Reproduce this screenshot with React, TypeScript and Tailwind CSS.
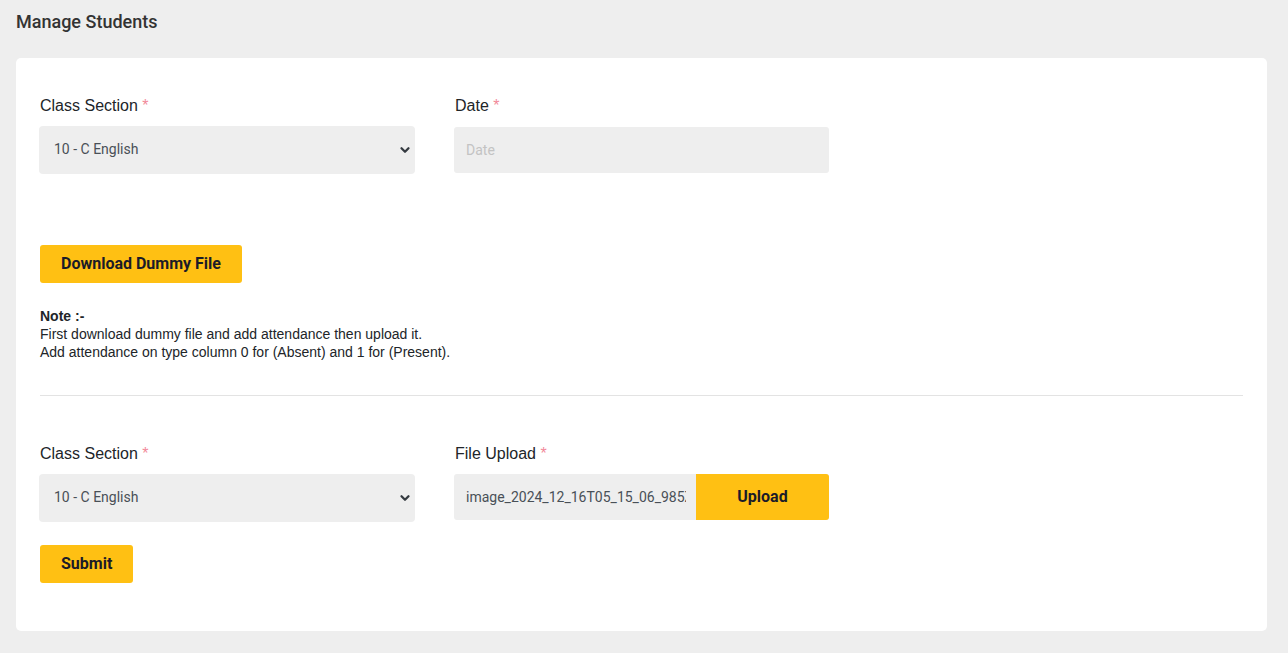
import React, { useState } from 'react';

const roboto = { fontFamily: 'Roboto, "Liberation Sans", sans-serif' };

function Label({ text }: { text: string }) {
  return (
    <label className="block text-[16px] leading-[24px] text-[#212529] mb-[8px] font-['Liberation_Sans',Arial,sans-serif]">
      {text} <span className="text-[#f2889a]">*</span>
    </label>
  );
}

function ClassSelect({ value, onChange }: { value: string; onChange: (v: string) => void }) {
  return (
    <div className="relative w-[376px]">
      <select
        value={value}
        onChange={(e) => onChange(e.target.value)}
        className="appearance-none w-full h-[48px] pl-[15px] pr-10 pb-px rounded-[4px] bg-[#eeeeee] text-[14px] text-[#495057] outline-none font-['Roboto',sans-serif]"
      >
        <option>10 - C English</option>
        <option>10 - A English</option>
        <option>10 - B English</option>
      </select>
      <svg
        className="pointer-events-none absolute right-[3px] top-1/2 -translate-y-1/2"
        width="14"
        height="14"
        viewBox="0 0 16 16"
        fill="none"
        stroke="#343a40"
        strokeWidth="2.6"
        strokeLinecap="round"
        strokeLinejoin="round"
      >
        <path d="M4 6l4 4 4-4" />
      </svg>
    </div>
  );
}

function YellowButton({ children, className = '' }: { children: React.ReactNode; className?: string }) {
  return (
    <button
      type="button"
      style={roboto}
      className={`h-[38px] rounded-[3px] bg-[#ffc013] text-[16px] font-bold text-[#1b1b28] ${className}`}
    >
      {children}
    </button>
  );
}

export default function App() {
  const [section, setSection] = useState('10 - C English');
  const [section2, setSection2] = useState('10 - C English');
  const [date, setDate] = useState('');

  return (
    <div className="min-h-screen bg-[#eeeeee] pl-4 pr-[21px] pt-[10px] pb-[22px]">
      <h1 style={roboto} className="text-[18px] leading-[24px] font-medium text-[#333333]">
        Manage Students
      </h1>

      <div className="mt-[24px] bg-white rounded-[5px] px-6 pt-[36px] pb-[48px]">
        <div className="flex gap-[39px] -ml-px">
          <div>
            <div className="pl-px">
              <Label text="Class Section" />
            </div>
            <ClassSelect value={section} onChange={setSection} />
          </div>
          <div>
            <div className="pl-px">
              <Label text="Date" />
            </div>
            <input
              type="text"
              value={date}
              onChange={(e) => setDate(e.target.value)}
              placeholder="Date"
              className="mt-px w-[375px] h-[46px] px-3 rounded-[3px] bg-[#eeeeee] text-[14px] text-[#495057] placeholder:text-[#c3c3c3] outline-none font-['Roboto',sans-serif]"
            />
          </div>
        </div>

        <YellowButton className="mt-[71px] px-[21px]">Download Dummy File</YellowButton>

        <div className="mt-[24px] text-[14px] leading-[18px] text-[#212529] font-['Liberation_Sans',Arial,sans-serif]">
          <p className="font-bold">Note :-</p>
          <p>First download dummy file and add attendance then upload it.</p>
          <p>Add attendance on type column 0 for (Absent) and 1 for (Present).</p>
        </div>

        <hr className="mt-[34px] border-0 border-t border-[#e3e3e3]" />

        <div className="mt-[46px] flex gap-[39px] -ml-px">
          <div>
            <div className="pl-px">
              <Label text="Class Section" />
            </div>
            <ClassSelect value={section2} onChange={setSection2} />
          </div>
          <div>
            <div className="pl-px">
              <Label text="File Upload" />
            </div>
            <div className="mt-[2px] flex w-[375px] h-[46px] rounded-[3px] overflow-hidden bg-[#eeeeee]">
              <div className="w-[242px] shrink-0 flex items-center pl-3 pr-[10px]">
                <input
                  type="text"
                  readOnly
                  value="image_2024_12_16T05_15_06_985Z.png"
                  className="w-full min-w-0 bg-transparent text-[14px] text-[#495057] outline-none font-['Roboto',sans-serif]"
                />
              </div>
              <button
                type="button"
                style={roboto}
                className="w-[133px] h-full bg-[#ffc013] text-[16px] font-bold text-[#1b1b28]"
              >
                Upload
              </button>
            </div>
          </div>
        </div>

        <YellowButton className="mt-[23px] px-[21px]">Submit</YellowButton>
      </div>
    </div>
  );
}
